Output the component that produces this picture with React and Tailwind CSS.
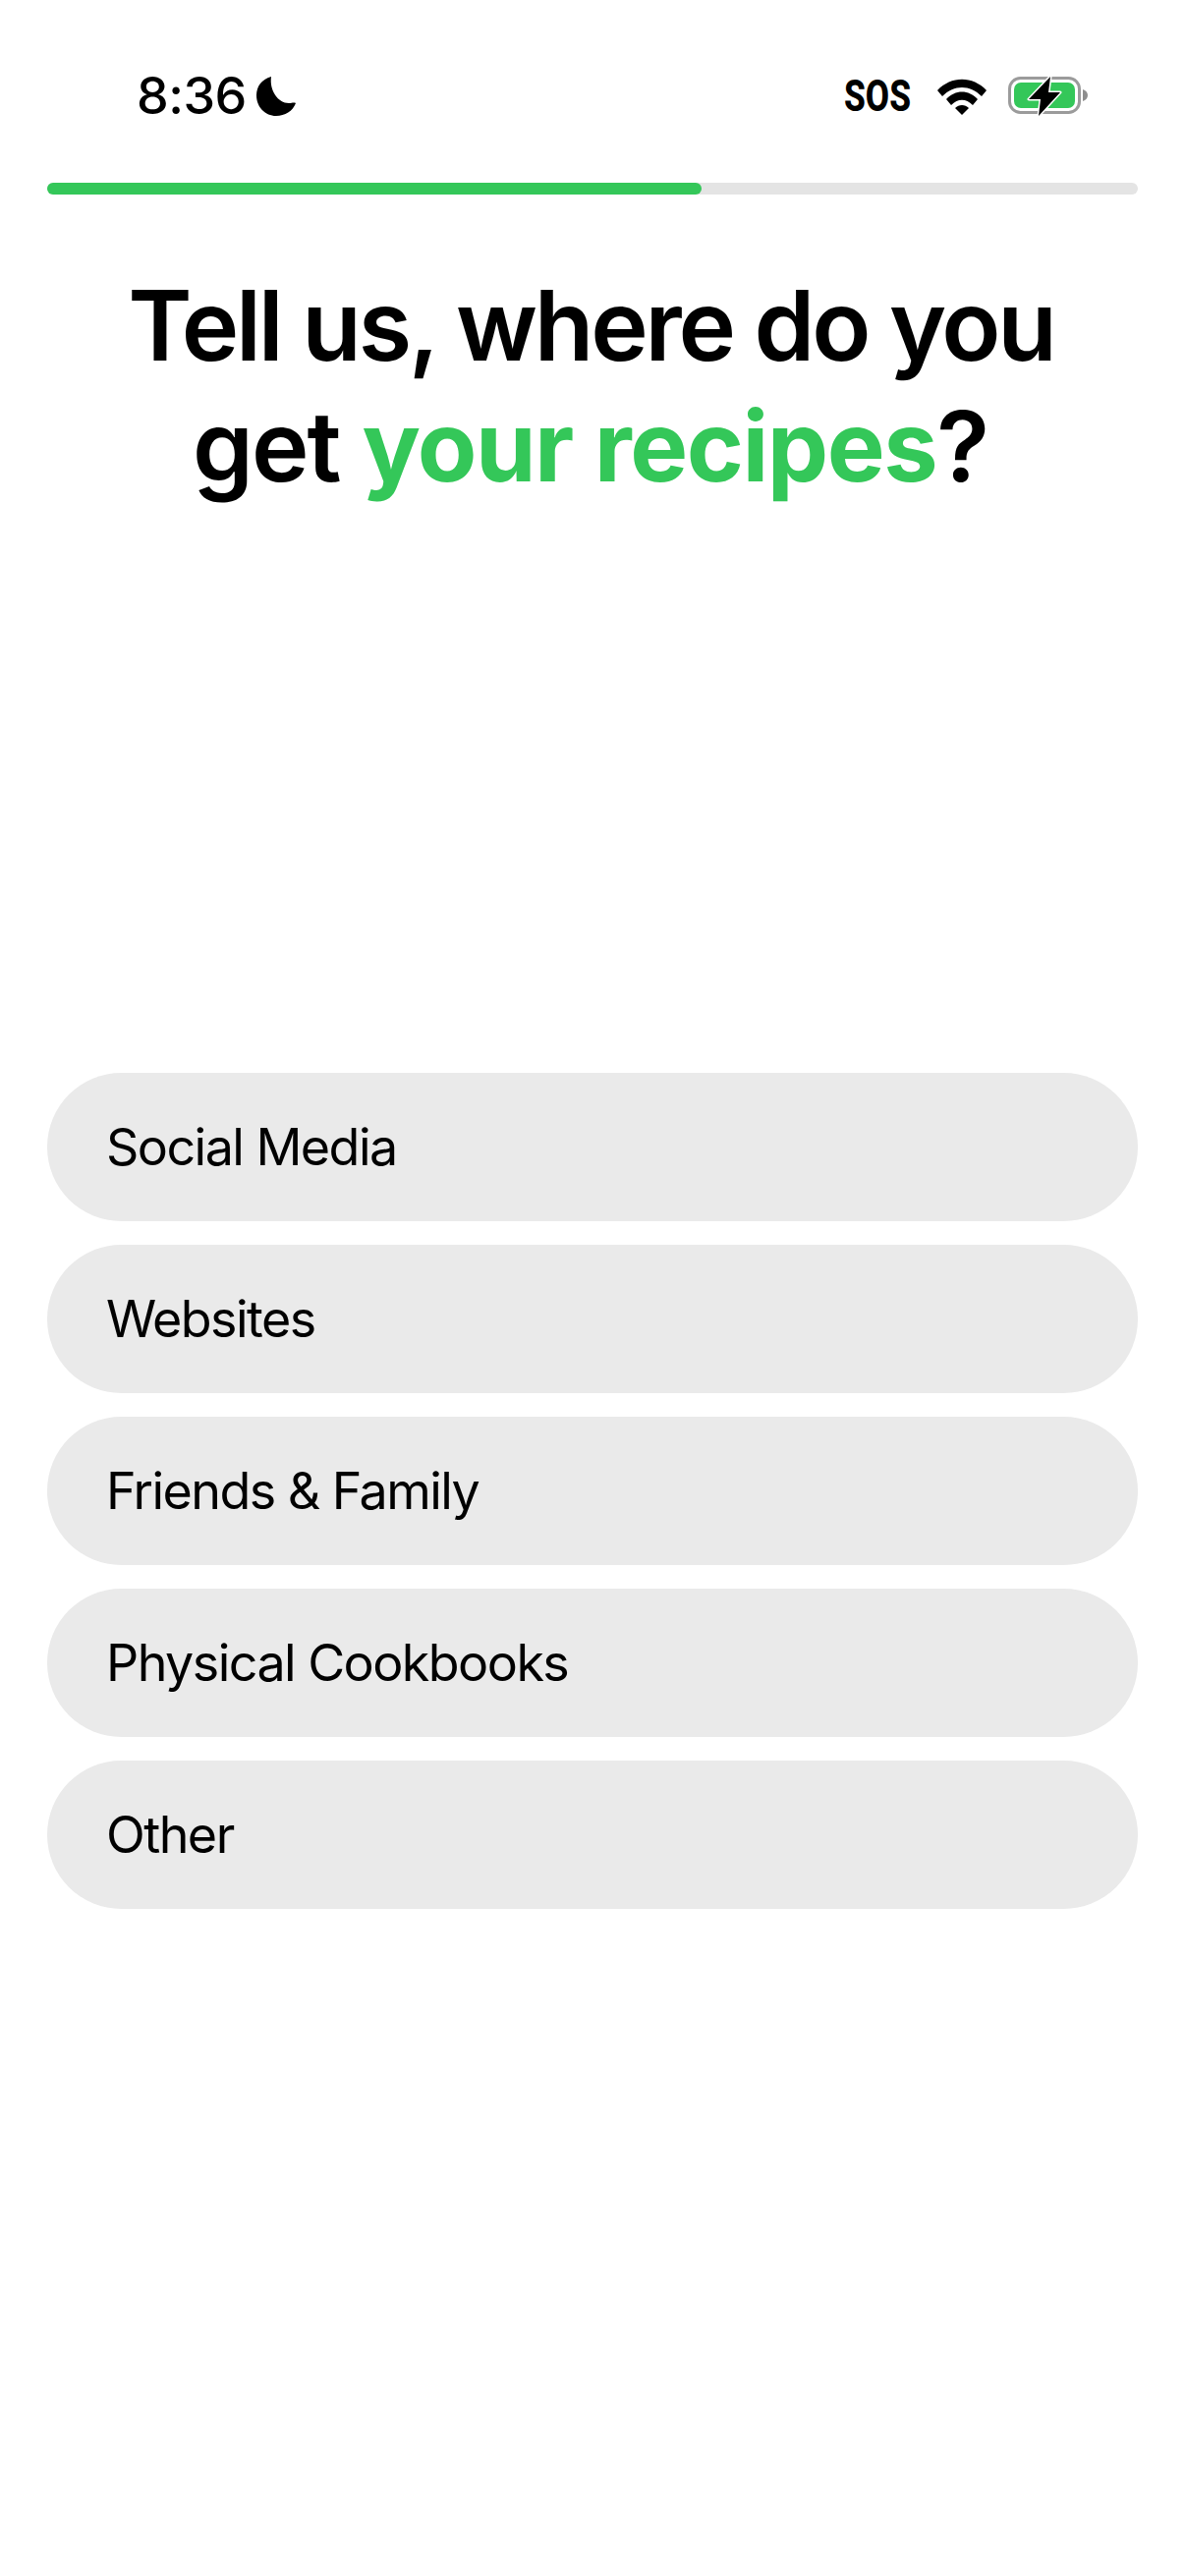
const options = ['Social Media', 'Websites', 'Friends & Family', 'Physical Cookbooks', 'Other'];

const MoonIcon = () => (
  <svg width="40" height="40" viewBox="0 0 40 40" className="ml-[10px]">
    <path d="M15 0 C5 3 0 10 0 19 C0 31 9 40 20 40 C29 40 37 35 40 27 C38 26 36 27 33 27 C22 27 13 14 15 0 Z" fill="#000" />
  </svg>
);

const WifiIcon = () => (
  <svg width="50" height="37" viewBox="0 0 50 37">
    <path d="M0 12 C14 -3 36 -3 50 12 L45 18 C33 6 17 6 5 18 Z" fill="#000" />
    <path d="M9 21 C18 11 32 11 41 21 L36 27 C29 20 21 20 14 27 Z" fill="#000" />
    <path d="M18 30 C22 26 28 26 32 30 L25 37 Z" fill="#000" />
  </svg>
);

const BatteryIcon = () => (
  <svg width="82" height="40" viewBox="0 0 82 40">
    <rect x="1.5" y="1.5" width="71" height="35" rx="11" fill="none" stroke="#9b9b9b" strokeWidth="3" />
    <rect x="6" y="6" width="62" height="26" rx="7" fill="#34c759" />
    <path d="M76 13 C79 14 81 16 81 19 C81 22 79 24 76 25 Z" fill="#8e8e8e" />
    <path d="M43 0 L21 23 L33 23 L31 40 L53 16 L41 16 Z" fill="#000" stroke="#fff" strokeWidth="3" paintOrder="stroke" strokeLinejoin="round" />
  </svg>
);

const StatusBar = () => (
  <div className="flex items-center justify-between h-[40px] mt-[78px] pl-[139px] pr-[98px]">
    <div className="flex items-center">
      <span className="text-[52px] leading-none font-medium tracking-[-0.5px] text-black">8:36</span>
      <MoonIcon />
    </div>
    <div className="flex items-center">
      <span className="text-[44px] leading-none font-extrabold text-black font-['Roboto',sans-serif] scale-x-[0.8] origin-right mr-[27px]">SOS</span>
      <WifiIcon />
      <div className="ml-[22px]">
        <BatteryIcon />
      </div>
    </div>
  </div>
);

const App = () => {
  return (
    <div className="w-[1206px] h-[2622px] bg-white font-['Inter',sans-serif] text-black overflow-hidden">
      <StatusBar />

      {/* Progress */}
      <div className="mx-[48px] mt-[68px] h-[12px] rounded-full bg-[#e4e4e4]">
        <div className="w-[666px] h-full rounded-full bg-[#34c759]" />
      </div>

      {/* Title */}
      <h1 className="mt-[72px] pr-[3px] text-center text-[99px] leading-[123px] font-semibold">
        <span className="tracking-[-3.2px]">Tell us, where do you</span>
        <br />
        <span className="tracking-[-2px]">get </span>
        <span className="font-bold tracking-[-1.5px] text-[#34c759]">your recipes</span>?
      </h1>

      {/* Options */}
      <div className="mx-[48px] mt-[576px] flex flex-col gap-[24px]">
        {options.map((label) => (
          <div key={label} className="h-[151px] flex items-center px-[60px] rounded-[76px] bg-[#eaeaea] text-[52px] font-[430] leading-none tracking-[-1.55px]">
            {label}
          </div>
        ))}
      </div>
    </div>
  );
};

export default App;
